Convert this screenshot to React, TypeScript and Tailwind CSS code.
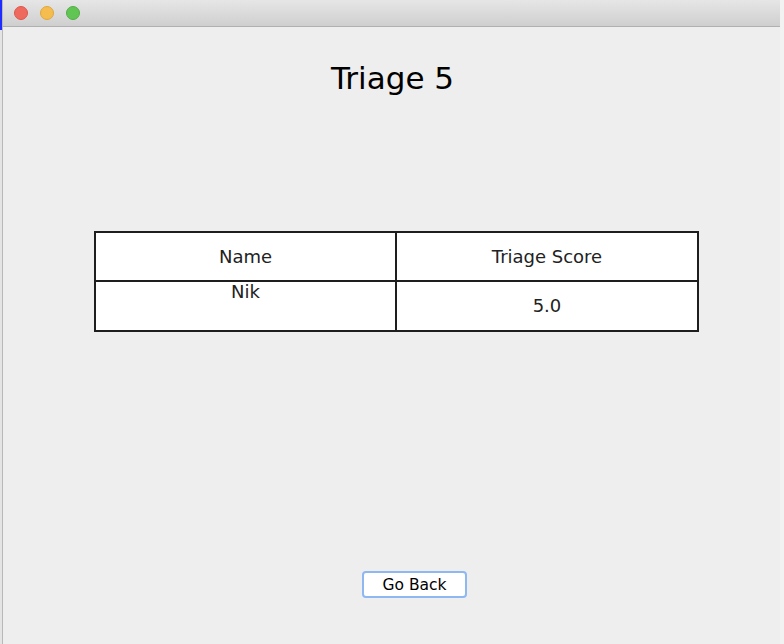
import React from "react";

export default function App() {
  return (
    <div className="flex h-[644px] w-[784px] overflow-hidden bg-[#eeeeee]" style={{ fontFamily: '"DejaVu Sans", sans-serif' }}>
      <div className="flex w-[2px] flex-col bg-[#e4e4e4]">
        <div className="h-[30px] w-[2px] bg-[#1f2bff]" />
      </div>
      <div className="flex w-[778px] flex-col border-l border-[#b8b8b8] bg-[#eeeeee]">
        <div className="flex h-[27px] items-center gap-[12px] border-b border-[#b0b0b0] bg-gradient-to-b from-[#e6e6e6] to-[#cfcfcf] pl-[11px]">
          <div className="h-[14px] w-[14px] rounded-full border border-[#e0554b] bg-[#ee6a5f]" />
          <div className="h-[14px] w-[14px] rounded-full border border-[#dea73c] bg-[#f5bd4f]" />
          <div className="h-[14px] w-[14px] rounded-full border border-[#52ad45] bg-[#61c554]" />
        </div>
        <div className="flex flex-1 flex-col">
          <div className="mt-[32px] pl-[2px] text-center text-[31px] leading-[38px] text-black">Triage 5</div>
          <div className="ml-[91px] mt-[134px] grid h-[101px] w-[605px] grid-cols-[301px_300px] grid-rows-[49px_48px] border-2 border-[#1e1e1e] bg-white text-[18px] text-[#222]">
            <div className="flex items-center justify-center border-b-2 border-r-2 border-[#1e1e1e]">Name</div>
            <div className="flex items-center justify-center border-b-2 border-[#1e1e1e]">Triage Score</div>
            <div className="flex justify-center border-r-2 border-[#1e1e1e] leading-[20px]">Nik</div>
            <div className="flex items-center justify-center pb-[2px]">5.0</div>
          </div>
          <div className="mt-[239px] flex justify-center pl-[46px]">
            <button className="h-[27px] w-[105px] rounded-[4px] border-2 border-[#8db8f2] bg-white text-[15.5px] leading-[20px] text-black">Go Back</button>
          </div>
        </div>
      </div>
      <div className="w-[4px] bg-[#f2f2f2]" />
    </div>
  );
}
